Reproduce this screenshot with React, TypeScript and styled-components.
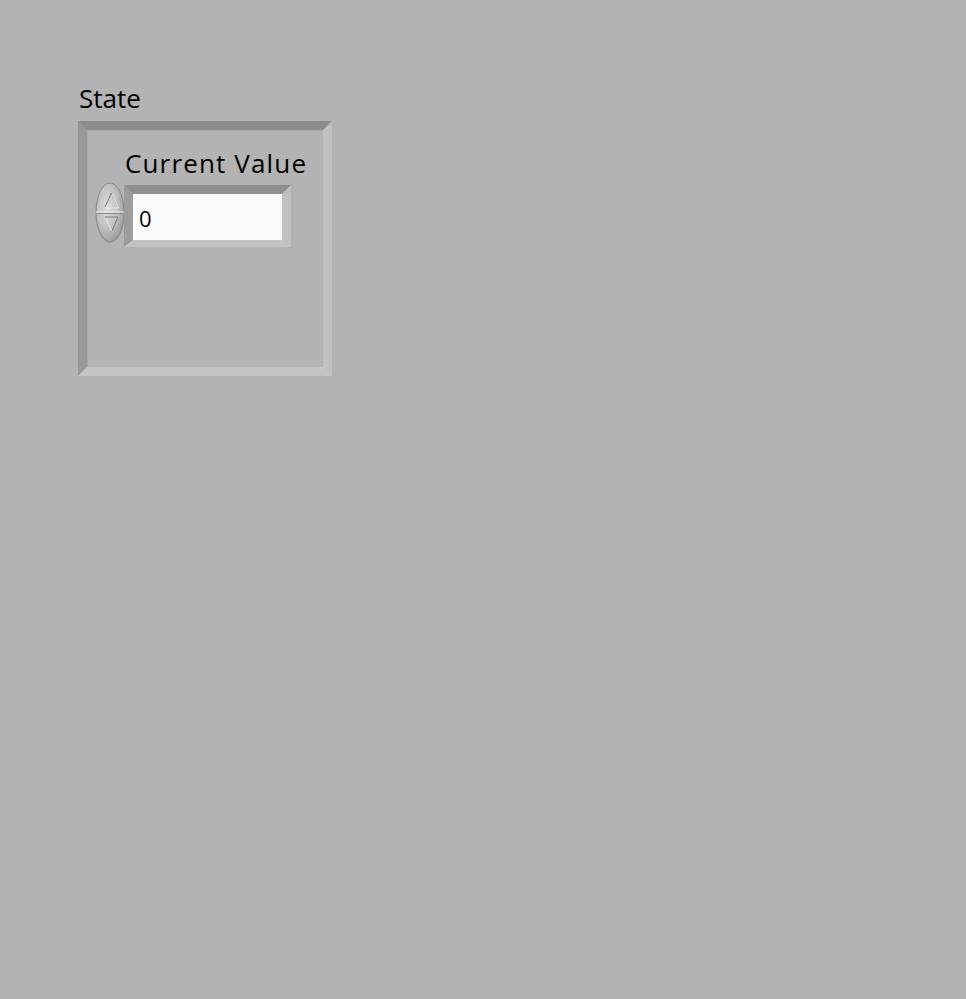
import styled, { createGlobalStyle } from 'styled-components';

const GlobalStyle = createGlobalStyle`
  html, body {
    margin: 0;
    padding: 0;
    background: #b3b3b3;
  }
  body {
    font-family: "Open Sans", "Noto Sans", sans-serif;
    color: #000000;
  }
`;

const SpinButton = () => (
  <SpinSvg width="30" height="61" viewBox="0 0 30 61">
    <defs>
      <radialGradient id="spinFill" cx="0.4" cy="0.4" r="0.7">
        <stop offset="0" stopColor="#dcdcdc" />
        <stop offset="0.5" stopColor="#c2c2c2" />
        <stop offset="0.85" stopColor="#a0a0a0" />
        <stop offset="1" stopColor="#808080" />
      </radialGradient>
    </defs>
    <ellipse cx="15" cy="30.5" rx="14.5" ry="30" fill="url(#spinFill)" />
    <ellipse cx="15" cy="30.5" rx="14" ry="29.5" fill="none" stroke="#888888" strokeWidth="1" />
    <line x1="1" y1="30" x2="29" y2="30" stroke="#f0f0f0" strokeWidth="1" />
    <line x1="1" y1="31.5" x2="29" y2="31.5" stroke="#888888" strokeWidth="1" />
    <polyline points="10,25 16.5,11 23,25" fill="none" stroke="#7a7a7a" strokeWidth="1" />
    <polyline points="10.8,26 23.5,26 17.3,12" fill="none" stroke="#eeeeee" strokeWidth="1" />
    <polyline points="10,35 23,35 16.5,50" fill="none" stroke="#7a7a7a" strokeWidth="1" />
    <polyline points="10.8,36 16.8,49.5" fill="none" stroke="#ececec" strokeWidth="1" />
  </SpinSvg>
);

export default function App() {
  return (
    <>
      <GlobalStyle />
      <Panel>
        <Label>State</Label>
        <Cluster>
          <Control>
            <ControlLabel>Current Value</ControlLabel>
            <ControlRow>
              <SpinButton />
              <DisplayFrame>
                <Display>0</Display>
              </DisplayFrame>
            </ControlRow>
          </Control>
        </Cluster>
      </Panel>
    </>
  );
}

const Panel = styled.div`
  min-height: 100vh;
  box-sizing: border-box;
  padding: 82px 0 0 78px;
  display: flex;
  flex-direction: column;
  align-items: flex-start;
`;

const Label = styled.div`
  margin-left: 1px;
  font-size: 26px;
  line-height: 32px;
  height: 32px;
`;

const Cluster = styled.div`
  margin-top: 7px;
  width: 254px;
  height: 255px;
  box-sizing: border-box;
  border-style: solid;
  border-width: 9px;
  border-color: #8d8d8d #c1c1c1 #c4c4c4 #989898;
  box-shadow: inset 0 1px 0 #a4a4a4, inset 1px 0 0 #a8a8a8;
  background: #b3b3b3;
  padding: 17px 0 0 8px;
`;

const Control = styled.div`
  display: flex;
  flex-direction: column;
  align-items: flex-start;
`;

const ControlLabel = styled.div`
  margin-left: 30px;
  font-size: 26px;
  line-height: 32px;
  height: 32px;
  letter-spacing: 1.15px;
  margin-bottom: 3px;
`;

const ControlRow = styled.div`
  display: flex;
  align-items: flex-start;
`;

const SpinSvg = styled.svg`
  display: block;
  flex-shrink: 0;
`;

const DisplayFrame = styled.div`
  margin-top: 3px;
  margin-left: -1px;
  width: 167px;
  height: 62px;
  box-sizing: border-box;
  border-style: solid;
  border-width: 9px 9px 7px 9px;
  border-color: #8f8f8f #c0c0c0 #c3c3c3 #9c9c9c;
`;

const Display = styled.div`
  height: 100%;
  box-sizing: border-box;
  background: #fafafa;
  padding: 2px 0 0 6px;
  font-size: 22px;
  line-height: 44px;
`;
